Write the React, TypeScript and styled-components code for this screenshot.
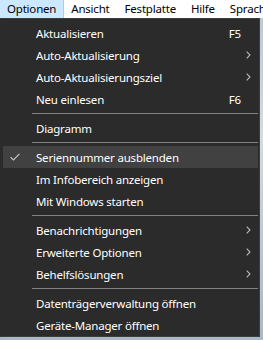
import React from "react";
import styled, { createGlobalStyle } from "styled-components";

const Global = createGlobalStyle`
  html, body { margin: 0; padding: 0; background: #c9d3dc; }
  body { width: 263px; height: 340px; overflow: hidden; font-family: "Noto Sans", "Open Sans", sans-serif; font-size: 11.5px; letter-spacing: -0.2px; }
`;

const Screen = styled.div`
  width: 263px;
  height: 340px;
  display: flex;
  flex-direction: column;
  background: linear-gradient(180deg, #b9c6d2 0%, #d4dbe2 40%, #aab7c4 100%);
`;

const MenuBar = styled.div`
  height: 18px;
  display: flex;
  align-items: stretch;
  background: #ffffff;
  white-space: nowrap;
  overflow: hidden;
`;

const BarItem = styled.div<{ $active?: boolean }>`
  box-sizing: border-box;
  padding: 0 7px;
  display: flex;
  align-items: center;
  color: #000;
  line-height: 18px;
  background: ${(p) => (p.$active ? "#cce8ff" : "transparent")};
  border-right: 1px solid ${(p) => (p.$active ? "#99d1ff" : "transparent")};
`;

const Body = styled.div`
  flex: 1;
  display: flex;
  align-items: flex-start;
`;

const Menu = styled.div`
  box-sizing: border-box;
  width: 260px;
  background: #2b2b2b;
  border: 1px solid #3d3d3d;
  border-left-color: #2b2b2b;
  padding: 3px 1px 0 2px;
  display: flex;
  flex-direction: column;
`;

const Item = styled.div<{ $hover?: boolean }>`
  height: 22px;
  display: flex;
  align-items: center;
  background: ${(p) => (p.$hover ? "#414141" : "transparent")};
  color: #ffffff;
`;

const CheckCell = styled.div`
  width: 33px;
  height: 22px;
  display: flex;
  align-items: center;
  padding-left: 7px;
  box-sizing: border-box;
`;

const Label = styled.span`
  flex: 1;
  white-space: nowrap;
`;

const Shortcut = styled.span`
  white-space: nowrap;
`;

const ArrowCell = styled.div`
  width: 17px;
  height: 22px;
  display: flex;
  align-items: center;
  padding-left: 5px;
  box-sizing: border-box;
`;

const Separator = styled.div`
  height: 7px;
  display: flex;
  align-items: center;
  padding-left: 29px;
  &::after {
    content: "";
    flex: 1;
    height: 1px;
    background: #808080;
  }
`;

type Entry =
  | { sep: true }
  | { label: string; shortcut?: string; sub?: boolean; checked?: boolean; hover?: boolean };

const entries: Entry[] = [
  { label: "Aktualisieren", shortcut: "F5" },
  { label: "Auto-Aktualisierung", sub: true },
  { label: "Auto-Aktualisierungsziel", sub: true },
  { label: "Neu einlesen", shortcut: "F6" },
  { sep: true },
  { label: "Diagramm" },
  { sep: true },
  { label: "Seriennummer ausblenden", checked: true, hover: true },
  { label: "Im Infobereich anzeigen" },
  { label: "Mit Windows starten" },
  { sep: true },
  { label: "Benachrichtigungen", sub: true },
  { label: "Erweiterte Optionen", sub: true },
  { label: "Behelfslösungen", sub: true },
  { sep: true },
  { label: "Datenträgerverwaltung öffnen" },
  { label: "Geräte-Manager öffnen" },
];

const Check = () => (
  <svg width="10" height="8" viewBox="0 0 10 8">
    <path d="M0.6 4.2 L3.4 7 L9.4 0.8" fill="none" stroke="#c8c8c8" strokeWidth="1.1" />
  </svg>
);

const Chevron = () => (
  <svg width="5" height="8" viewBox="0 0 5 8">
    <path d="M0.7 0.6 L4 4 L0.7 7.4" fill="none" stroke="#b8b8b8" strokeWidth="1.1" />
  </svg>
);

export default function App() {
  return (
    <>
      <Global />
      <Screen>
        <MenuBar>
          <BarItem $active>Optionen</BarItem>
          <BarItem>Ansicht</BarItem>
          <BarItem>Festplatte</BarItem>
          <BarItem>Hilfe</BarItem>
          <BarItem>Sprache</BarItem>
        </MenuBar>
        <Body>
          <Menu>
            {entries.map((e, i) =>
              "sep" in e ? (
                <Separator key={i} />
              ) : (
                <Item key={i} $hover={e.hover}>
                  <CheckCell>{e.checked ? <Check /> : null}</CheckCell>
                  <Label>{e.label}</Label>
                  <Shortcut>{e.shortcut ?? ""}</Shortcut>
                  <ArrowCell>{e.sub ? <Chevron /> : null}</ArrowCell>
                </Item>
              )
            )}
          </Menu>
        </Body>
      </Screen>
    </>
  );
}
